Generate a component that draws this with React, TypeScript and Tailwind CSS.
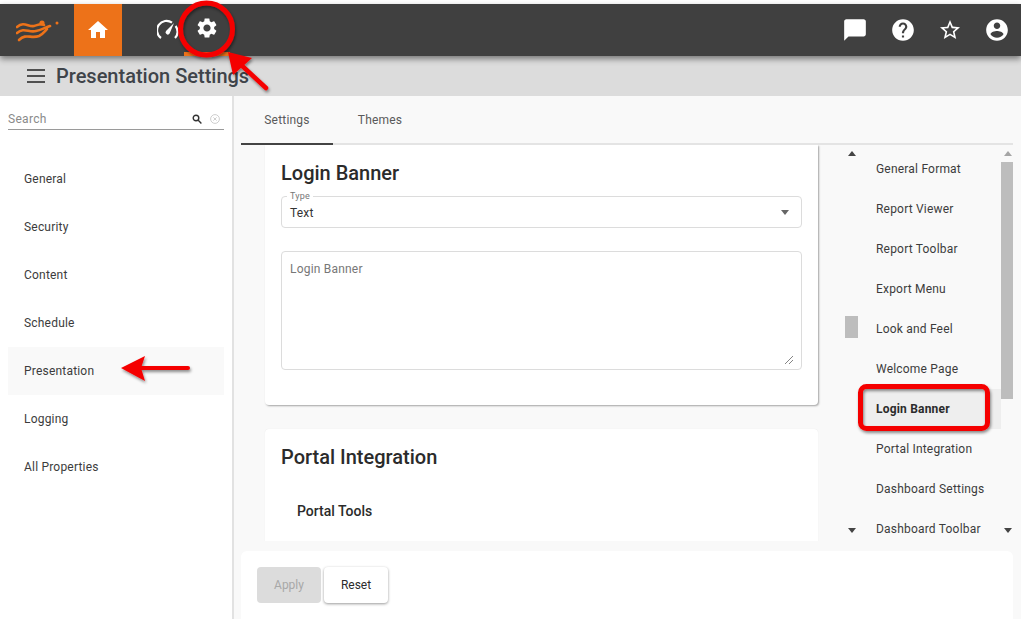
import React from "react";

const P = {
  home: "M10 20v-6h4v6h5v-8h3L12 3 2 12h3v8z",
  gear: "M19.14 12.94c.04-.3.06-.61.06-.94 0-.32-.02-.64-.07-.94l2.03-1.58c.18-.14.23-.41.12-.61l-1.92-3.32c-.12-.22-.37-.29-.59-.22l-2.39.96c-.5-.38-1.03-.7-1.62-.94l-.36-2.54c-.04-.24-.24-.41-.48-.41h-3.84c-.24 0-.43.17-.47.41l-.36 2.54c-.59.24-1.13.57-1.62.94l-2.39-.96c-.22-.08-.47 0-.59.22L2.74 8.87c-.12.21-.08.47.12.61l2.03 1.58c-.05.3-.09.63-.09.94s.02.64.07.94l-2.03 1.58c-.18.14-.23.41-.12.61l1.92 3.32c.12.22.37.29.59.22l2.39-.96c.5.38 1.03.7 1.62.94l.36 2.54c.05.24.24.41.48.41h3.84c.24 0 .44-.17.47-.41l.36-2.54c.59-.24 1.13-.56 1.62-.94l2.39.96c.22.08.47 0 .59-.22l1.92-3.32c.12-.22.07-.47-.12-.61l-2.01-1.58zM12 15.6c-1.98 0-3.6-1.62-3.6-3.6s1.62-3.6 3.6-3.6 3.6 1.62 3.6 3.6-1.62 3.6-3.6 3.6z",
  chat: "M20 2H4c-1.1 0-2 .9-2 2v18l4-4h14c1.1 0 2-.9 2-2V4c0-1.1-.9-2-2-2z",
  help: "M12 2C6.48 2 2 6.48 2 12s4.48 10 10 10 10-4.48 10-10S17.52 2 12 2zm1 17h-2v-2h2v2zm2.07-7.75l-.9.92C13.45 12.9 13 13.5 13 15h-2v-.5c0-1.1.45-2.1 1.17-2.83l1.24-1.26c.37-.36.59-.86.59-1.41 0-1.1-.9-2-2-2s-2 .9-2 2H8c0-2.21 1.79-4 4-4s4 1.79 4 4c0 .88-.36 1.68-.93 2.25z",
  star: "M22 9.24l-7.19-.62L12 2 9.19 8.63 2 9.24l5.46 4.73L5.82 21 12 17.27 18.18 21l-1.63-7.03L22 9.24zM12 15.4l-3.76 2.27 1-4.28-3.32-2.88 4.38-.38L12 6.1l1.71 4.04 4.38.38-3.32 2.88 1 4.28L12 15.4z",
  user: "M12 2C6.48 2 2 6.48 2 12s4.48 10 10 10 10-4.48 10-10S17.52 2 12 2zm0 3c1.66 0 3 1.34 3 3s-1.34 3-3 3-3-1.34-3-3 1.34-3 3-3zm0 14.2c-2.5 0-4.71-1.28-6-3.22.03-1.99 4-3.08 6-3.08 1.99 0 5.97 1.09 6 3.08-1.29 1.94-3.5 3.22-6 3.22z",
};

function Icon({ d, size = 26 }: { d: string; size?: number }) {
  return (
    <svg width={size} height={size} viewBox="0 0 24 24" fill="white">
      <path d={d} />
    </svg>
  );
}

function Logo() {
  return (
    <svg width="44" height="24" viewBox="0 0 44 24" fill="none">
      <path d="M1 8 C8 2 12 8 18 7 C22 6 25 4 28 6" stroke="#ed7219" strokeWidth="2.6" strokeLinecap="round" />
      <path d="M1 14 C8 8 13 14 20 12 C25 11 28 9 34 7" stroke="#ed7219" strokeWidth="2.6" strokeLinecap="round" />
      <path d="M3 21 C10 14 15 20 23 17 C27 15 29 12 31 10" stroke="#ed7219" strokeWidth="2.6" strokeLinecap="round" />
      <circle cx="26" cy="4" r="2.6" fill="#ed7219" />
      <circle cx="41" cy="4" r="1.5" fill="#ed7219" />
    </svg>
  );
}

function Gauge() {
  return (
    <svg width="22" height="22" viewBox="0 0 22 22" fill="none">
      <path d="M4 19 A9 9 0 0 1 15 3.6" stroke="white" strokeWidth="2.2" />
      <path d="M18.6 7 A9 9 0 0 1 18 19" stroke="white" strokeWidth="2.2" />
      <path d="M9 12 L17 4 L12.6 14.6 A2.2 2.2 0 0 1 9 12z" fill="white" />
    </svg>
  );
}

function Tri({ up, color }: { up?: boolean; color: string }) {
  return (
    <svg width="8" height="5" viewBox="0 0 8 5" fill={color}>
      <path d={up ? "M4 0 L8 5 L0 5z" : "M0 0 L8 0 L4 5z"} />
    </svg>
  );
}

const sideItems = ["General", "Security", "Content", "Schedule", "Presentation", "Logging", "All Properties"];
const navItems = [
  "General Format",
  "Report Viewer",
  "Report Toolbar",
  "Export Menu",
  "Look and Feel",
  "Welcome Page",
  "Login Banner",
  "Portal Integration",
  "Dashboard Settings",
  "Dashboard Toolbar",
];

export default function App() {
  return (
    <div className="relative w-[1021px] h-[619px] overflow-hidden bg-white pt-1 flex flex-col font-['Roboto',sans-serif] text-[#3c3c3c]">
      <header className="relative z-10 h-[52px] shrink-0 bg-[#404040] flex items-center shadow-[0_3px_6px_rgba(0,0,0,0.45)]">
        <div className="w-[74px] pl-4 pt-0.5 flex items-center"><Logo /></div>
        <div className="w-12 h-full bg-[#ed7219] flex items-center justify-center"><Icon d={P.home} size={24} /></div>
        <div className="w-[60px] h-full flex items-center justify-end pr-[3px]"><Gauge /></div>
        <div className="relative w-[46px] ml-[2px] h-full flex items-center justify-center border-b-4 border-[#ed7219]">
          <Icon d={P.gear} size={24} />
        </div>
        <div className="ml-auto flex items-center gap-[22px] pr-[11px]">
          <Icon d={P.chat} />
          <Icon d={P.help} />
          <Icon d={P.star} size={24} />
          <Icon d={P.user} />
        </div>
      </header>

      <div className="h-10 shrink-0 bg-[#dcdcdc] flex items-center pl-[27px] gap-[11px]">
        <div className="w-[18px] flex flex-col gap-1">
          <div className="h-0.5 bg-[#505050]" />
          <div className="h-0.5 bg-[#505050]" />
          <div className="h-0.5 bg-[#505050]" />
        </div>
        <div className="text-[20px] font-medium text-[#3f444a]">Presentation Settings</div>
      </div>

      <div className="flex-1 flex min-h-0">
        <aside className="w-[234px] shrink-0 border-r-2 border-[#e2e2e2] bg-white px-2 pt-3">
          <div className="h-[22px] w-[216px] border-b border-[#9a9a9a] flex items-center">
            <span className="text-[12px] text-[#8a8a8a] tracking-[0.3px]">Search</span>
            <svg className="ml-auto" width="10" height="10" viewBox="0 0 10 10" fill="none" stroke="#333" strokeWidth="1.4">
              <circle cx="4" cy="4" r="2.8" />
              <path d="M6 6 L9.4 9.4" />
            </svg>
            <svg className="ml-[8px] mr-[4px]" width="10" height="10" viewBox="0 0 10 10" fill="none" stroke="#c8c8c8" strokeWidth="0.9">
              <circle cx="5" cy="5" r="4.4" />
              <path d="M3.4 3.4 L6.6 6.6 M6.6 3.4 L3.4 6.6" />
            </svg>
          </div>
          <nav className="mt-[25px] w-[216px] flex flex-col">
            {sideItems.map((s) => (
              <div key={s} className={`h-12 flex items-center pl-4 text-[12px] tracking-[0.2px] ${s === "Presentation" ? "bg-[#f9f9f9]" : ""}`}>
                {s}
              </div>
            ))}
          </nav>
        </aside>

        <main className="flex-1 min-w-0 bg-[#f9f9f9] pl-[7px] pr-2 flex flex-col">
          <div className="h-[49px] shrink-0 border-b-2 border-[#e4e4e4] flex text-[12px] tracking-[0.2px] text-[#5a5a5a]">
            <div className="w-[92px] h-[49px] flex items-center justify-center border-b-2 border-[#444]">Settings</div>
            <div className="w-[94px] flex items-center justify-center">Themes</div>
          </div>

          <div className="h-[396px] shrink-0 flex overflow-hidden">
            <div className="w-[577px] shrink-0 pl-6 flex flex-col gap-6">
              <section className="h-[260px] shrink-0 bg-white rounded-b shadow-[1px_1px_2px_rgba(0,0,0,0.35)] px-4 pt-[16px]">
                <h2 className="text-[20px] leading-6 font-medium text-[#2b2b2b]">Login Banner</h2>
                <div className="relative mt-[11px] h-8 border border-[#dcdcdc] rounded flex items-center pl-2 pr-3 text-[12px] tracking-[0.2px]">
                  <span className="absolute -top-[6px] left-[5px] bg-white px-[3px] text-[9px] leading-[11px] text-[#777]">Type</span>
                  <span className="text-[#333] mt-[2px]">Text</span>
                  <span className="ml-auto flex"><Tri color="#666" /></span>
                </div>
                <div className="relative mt-[23px] h-[119px] border border-[#dcdcdc] rounded pl-2 pt-2 text-[12px] tracking-[0.2px] text-[#777]">
                  Login Banner
                  <svg className="absolute right-[8px] bottom-[5px]" width="9" height="9" viewBox="0 0 9 9" stroke="#666" strokeWidth="0.8">
                    <path d="M1 9 L9 1 M5 9 L9 5" />
                  </svg>
                </div>
              </section>
              <section className="h-[140px] shrink-0 bg-white rounded-t shadow-[0_0_1px_rgba(0,0,0,0.1)] px-4 pt-[16px]">
                <h2 className="text-[20px] leading-6 font-medium text-[#2b2b2b]">Portal Integration</h2>
                <div className="mt-[34px] pl-4 text-[14px] leading-4 font-medium text-[#2b2b2b]">Portal Tools</div>
              </section>
            </div>

            <div className="w-[13px] ml-[27px] shrink-0 flex flex-col items-center pt-[6px]">
              <Tri up color="#444" />
              <div className="w-[13px] h-[22px] bg-[#bdbdbd] mt-[160px]" />
              <div className="mt-auto mb-[8px] flex"><Tri color="#444" /></div>
            </div>

            <div className="w-[141px] shrink-0 ml-[2px] pt-[4px]">
              {navItems.map((n) => (
                <div key={n} className={`h-10 flex items-center pl-4 text-[12px] tracking-[0.2px] ${n === "Login Banner" ? "font-bold bg-[#eeeeee] text-[#2b2b2b]" : ""}`}>
                  {n}
                </div>
              ))}
            </div>

            <div className="w-[13px] shrink-0 flex flex-col items-center pt-[6px]">
              <Tri up color="#a5a5a5" />
              <div className="w-[13px] h-[237px] bg-[#bdbdbd] mt-[6px]" />
              <div className="mt-auto mb-[8px] flex"><Tri color="#444" /></div>
            </div>
          </div>

          <div className="mt-[10px] flex-1 bg-white rounded-t-md pl-4 pt-[16px] flex gap-[3px] items-start">
            <div className="w-16 h-9 rounded bg-[#dcdcdc] text-[#a8a8a8] text-[12px] flex items-center justify-center">Apply</div>
            <div className="w-16 h-9 rounded bg-white text-[#2b2b2b] text-[12px] flex items-center justify-center shadow-[0_1px_3px_rgba(0,0,0,0.4)]">Reset</div>
          </div>
        </main>
      </div>

      <svg className="absolute inset-0 z-20 pointer-events-none" width="1021" height="619" viewBox="0 0 1021 619" fill="none">
        <defs>
          <filter id="sh" x="-30%" y="-30%" width="160%" height="160%">
            <feDropShadow dx="1" dy="2" stdDeviation="1.6" floodColor="#000" floodOpacity="0.45" />
          </filter>
        </defs>
        <g filter="url(#sh)">
          <circle cx="206.5" cy="29" r="26" stroke="#f50000" strokeWidth="5" />
          <path d="M266 88 L238 62" stroke="#f50000" strokeWidth="4.5" strokeLinecap="round" />
          <path d="M228 52 L252 58 L233 75z" fill="#f50000" />
          <path d="M188 368 L135 368" stroke="#f50000" strokeWidth="4" strokeLinecap="round" />
          <path d="M121 368 L145 356 L141 368 L145 381z" fill="#f50000" />
          <rect x="860.5" y="386.5" width="127" height="42" rx="6" stroke="#f50000" strokeWidth="5" />
        </g>
      </svg>
    </div>
  );
}
